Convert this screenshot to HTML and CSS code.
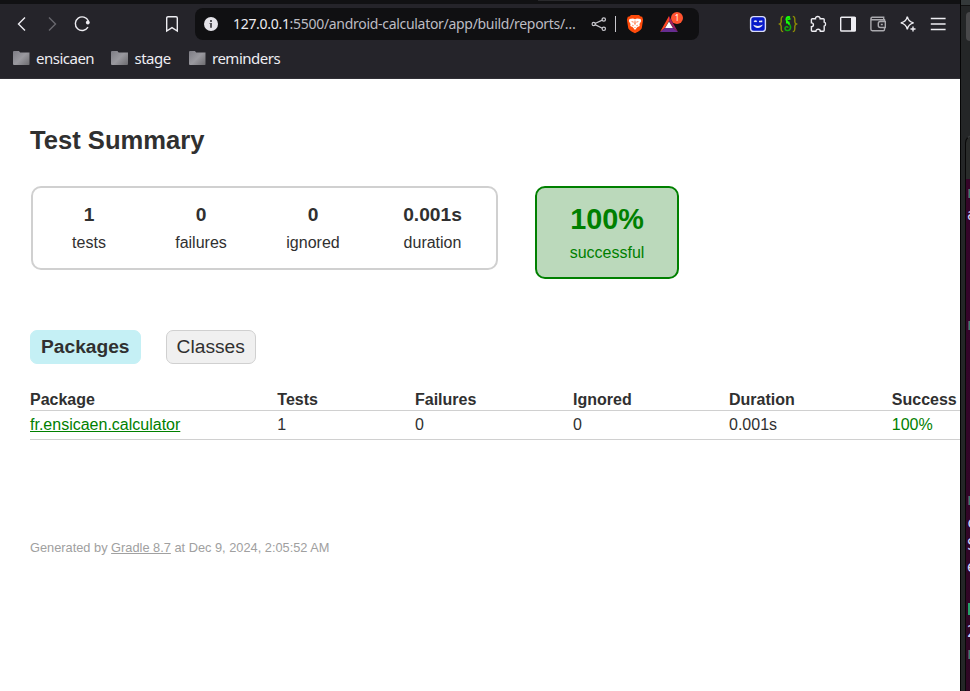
FILE: index.html
```html
<!DOCTYPE html>
<html lang="en">
<head>
<meta charset="utf-8">
<title>Test results - Test Summary</title>
<link rel="stylesheet" href="styles.css">
</head>
<body>
<div class="desktop">
<div class="browser">
  <div class="tabstrip"><span class="tab-edge"></span></div>
  <header class="toolbar">
    <button class="tool"><svg width="20" height="20" viewBox="0 0 20 20"><path d="M13 3.5 6.5 10l6.500 6.500"/></svg></button>
    <button class="tool dim"><svg width="20" height="20" viewBox="0 0 20 20"><path d="M7 3.500l6.500 6.500L7 16.500"/></svg></button>
    <button class="tool"><svg width="20" height="20" viewBox="0 0 20 20"><path d="M16 13.200A6.800 6.800 0 1 1 16.400 7"/><circle cx="15.800" cy="8.500" r="1.900" class="solid"/></svg></button>
    <button class="tool bookmark"><svg width="20" height="20" viewBox="0 0 20 20"><path d="M4.700 4a1.300 1.300 0 0 1 1.300-1.300h8a1.300 1.300 0 0 1 1.300 1.300v13L10 13.600 4.700 17z"/></svg></button>
    <div class="address">
      <svg class="info" width="14" height="14" viewBox="0 0 14 14"><circle cx="7" cy="7" r="7" fill="#e4e3e9"/><path d="M6 2.900h2v2H6zM5.500 6H8v4.800H6V7h-.500z" fill="#55545a"/></svg>
      <span class="url"><b>127.0.0.1</b>:5500/android-calculator/app/build/reports/…</span>
      <svg class="share" width="16" height="16" viewBox="0 0 16 16"><path d="m4 7.500 7.300-3.400M4 8.600l7.300 3.600"/><circle cx="2.700" cy="8" r="1.600"/><circle cx="12.800" cy="3.500" r="1.700"/><circle cx="12.800" cy="12.800" r="1.700"/></svg>
      <span class="divider"></span>
      <svg class="shield" width="18" height="20" viewBox="0 0 18 20"><path fill="#ff4b0b" d="M5 1h8l1.600 1.500 1.600.300.900 3-1.300 8.300c-.500 1.900-4.500 4.500-6.800 5.200C6.700 18.600 2.700 16 2.200 14.100L.900 5.800l.900-3 1.600-.300z"/><path fill="#fff" d="M3.500 5 7 4.600l2 .6 2-.6 3.500.400.700 2-1.700 3 .2 2-2.500 1.200L9 16l-2.200-2.800-2.500-1.200.200-2-1.700-3z"/><path fill="#ff4b0b" d="m5 7.200 2.700.5-.4 1zM13 7.200l-2.700.5.4 1zM8.700 6.500h.6l.3 3.800-.6.500-.6-.5zM6.500 10.500l1.300 1.600-1.200.2zM11.500 10.500l-1.300 1.600 1.200.2zM8 13h2l-1 .8z"/></svg>
      <span class="rewards"><svg width="18" height="16" viewBox="0 0 18 16"><path fill="#ff4724" d="M9 0v5l-4.200 7L0 16z"/><path fill="#9e1f63" d="m9 0 9 16-4.800-4L9 5z"/><path fill="#662d91" d="m0 16 4.800-4h8.400l4.800 4z"/><path fill="#fff" d="m9 5.400 3.900 6.600H5.100z"/></svg><i class="badge">1</i></span>
    </div>
    <div class="actions">
      <span class="tool"><svg width="20" height="20" viewBox="0 0 20 20"><rect x="2.600" y="2.600" width="14.800" height="14.800" rx="3.200" fill="#0719c9" stroke="#d9dcf8"/><path d="M5.300 10.800c.7 4 8.200 4.300 9.500-.3-2.500 1.700-6.500 1.900-9.500.3z" class="solid"/><path d="M6.200 7.800c.8-.9 1.700-.9 2.500 0M11 7.500h1.700M13.500 6.500v1.800" stroke-width="1.600"/></svg></span>
      <span class="tool"><svg width="20" height="20" viewBox="0 0 20 20"><path d="M5.200 2.500c-2 0-2 1-2 3v2c0 1.300-.4 2-1.500 2.500 1.100.5 1.500 1.200 1.500 2.500v2c0 2 0 3 2 3M14.800 2.500c2 0 2 1 2 3v2c0 1.300.4 2 1.500 2.500-1.100.500-1.500 1.200-1.500 2.500v2c0 2 0 3-2 3" stroke="#8d8b05"/><path d="M10.500 9c2 2.200 2.800 4.200 1.500 6.200-1.500 2.200-5 1.500-5-.8 0-2 2.700-2.400 3-.6" stroke="#11a60e" stroke-width="1.600"/><path d="M12 3.200C8.500 2.300 7.500 5 9 7.200l2.500 3.300M9.500 5.500l3-.8M8 8.500l3.500 0" stroke="#16ff08" stroke-width="1.800"/></svg></span>
      <span class="tool"><svg width="20" height="20" viewBox="0 0 20 20"><path d="M4.300 4.700h3.200c-.2-3 4.700-3 4.600 0h3.200c.6 0 .9.400.9.900v2.500c1.800.200 1.800 3.800 0 4v4.200c0 .600-.300.900-.900.900h-3c0-2.700-4.400-2.700-4.400 0H4.300c-.5 0-.9-.3-.9-.9v-3.600c2.700 0 2.700-3.800 0-3.800V5.600c0-.5.400-.9.900-.9z"/></svg></span>
      <span class="tool"><svg width="20" height="20" viewBox="0 0 20 20"><rect x="2.700" y="3.200" width="14.600" height="13.800" rx=".8"/><path class="solid" d="M13 3h4.500v14H13z"/></svg></span>
      <span class="tool muted"><svg width="20" height="20" viewBox="0 0 20 20"><path d="M16.500 7.200V5.700H4.200a1.200 1.200 0 0 1 0-2.400h11.500v2M2.900 4.500v10.800c0 .8.600 1.400 1.400 1.400h11c.7 0 1.200-.500 1.200-1.200v-2M17.300 7.500v6h-5a2 2 0 0 1-2-2v-2a2 2 0 0 1 2-2zM12.800 10.500h2"/></svg></span>
      <span class="tool"><svg width="20" height="20" viewBox="0 0 20 20"><path d="M9.300 2.700c.8 3.800 2.300 5.300 6.300 6.200-4 .9-5.500 2.500-6.300 6.500-.8-4-2.400-5.600-6.500-6.500 4.100-.9 5.700-2.400 6.500-6.200zM15 12.500v5M12.500 15h5"/></svg></span>
      <span class="tool"><svg width="20" height="20" viewBox="0 0 20 20"><path d="M2.800 4.500h14.800M2.800 10h14.800M2.800 15.500h14.800"/></svg></span>
    </div>
  </header>
  <nav class="bookmarks">
    <a><i class="folder"></i><span class="bm1">ensicaen</span></a>
    <a><i class="folder"></i><span class="bm2">stage</span></a>
    <a><i class="folder"></i><span class="bm3">reminders</span></a>
  </nav>
  <main class="report">
    <h1>Test Summary</h1>
    <div class="summary">
      <div class="group">
        <div class="stat"><div class="counter">1</div><p>tests</p></div>
        <div class="stat"><div class="counter">0</div><p>failures</p></div>
        <div class="stat"><div class="counter">0</div><p>ignored</p></div>
        <div class="stat"><div class="counter">0.001s</div><p>duration</p></div>
      </div>
      <div class="rate"><div class="percent">100%</div><p>successful</p></div>
    </div>
    <div class="tabs"><a class="tab selected">Packages</a><a class="tab">Classes</a></div>
    <div class="table">
      <div class="row head"><span>Package</span><span>Tests</span><span>Failures</span><span>Ignored</span><span>Duration</span><span>Success</span></div>
      <div class="row"><span><a class="link">fr.ensicaen.calculator</a></span><span>1</span><span>0</span><span>0</span><span>0.001s</span><span class="ok">100%</span></div>
    </div>
    <footer>Generated by <a>Gradle 8.7</a> at Dec 9, 2024, 2:05:52 AM</footer>
  </main>
</div>
<aside class="behind">
  <div class="panel"></div>
  <div class="window-tab"></div>
  <div class="terminal">
    <i class="mark" style="top:11px"></i><b style="top:27px">a</b>
    <i class="mark" style="top:143px"></i><i class="mark" style="top:318px"></i>
    <b style="top:335px">c</b><b style="top:357px">S</b><b style="top:379px">e</b>
    <i class="mark bright" style="top:425px"></i><b style="top:444px">2</b><i class="mark" style="top:472px"></i>
  </div>
</aside>
</div>
</body>
</html>
```
FILE: styles.css
```css
* { box-sizing: border-box; }
body { margin: 0; font-family: "Liberation Sans", Arial, sans-serif; font-size: 16px; color: #303030; overflow: hidden; }
p, h1 { margin: 0; }
.desktop { display: flex; width: 970px; height: 691px; }
.browser { width: 960px; height: 691px; overflow: hidden; background: #fff; }
.tabstrip { height: 4px; background: #111113; }
.tab-edge { display: block; width: 62px; height: 1px; margin-left: 538px; background: #29292c; }
.toolbar { height: 40px; background: #25242a; display: flex; align-items: center; padding: 0 7px; }
.tool { width: 30px; height: 30px; padding: 0; border: 0; background: none; display: flex; align-items: center; justify-content: center; color: #eeedf2; }
.tool svg, .share { fill: none; stroke: currentColor; stroke-width: 1.4; }
.tool .solid { fill: currentColor; stroke: none; }
.dim { color: #69686e; }
.muted { color: #aaa9ae; }
.bookmark { margin-left: 60px; }
.address { width: 504px; height: 32px; margin-left: 8px; border-radius: 8px; background: #101012; display: flex; align-items: center; padding-left: 9px; flex: none; }
.url { width: 346px; margin-left: 15px; white-space: nowrap; font: 14px/20px "Noto Sans", sans-serif; letter-spacing: -.3px; color: #bdbcc3; }
.url b { font-weight: 400; color: #eceaf0; }
.share { margin-left: 12px; color: #c8c7cd; stroke-width: 1.2; }
.divider { width: 1px; height: 16px; background: #c8c7cd; margin-left: 8px; }
.shield { margin-left: 10px; }
.rewards { position: relative; display: flex; margin-left: 16px; }
.badge { position: absolute; left: 11px; top: -4px; width: 12px; height: 12px; border-radius: 50%; background: #ff532f; color: #fff; font: 8px/12px "Noto Sans", sans-serif; text-align: center; }
.actions { display: flex; margin-left: 44px; }
.bookmarks { height: 35px; background: #25242a; display: flex; align-items: flex-start; padding-left: 12.500px; border-bottom: 1px solid #302f35; }
.bookmarks a { display: flex; align-items: center; height: 28px; margin-right: 17px; color: #eeedf2; font: 15px/20px "Noto Sans", sans-serif; }
.bookmarks span { margin-left: 6.500px; white-space: nowrap; letter-spacing: -.5px; }
.bm1 { width: 58px; }
.bm2 { width: 37px; }
.bm3 { width: 70px; }
.folder { width: 17px; height: 14px; background: linear-gradient(135deg, #7d7c84, #9a999f 50%, #6b6a6e); clip-path: polygon(0 0, 38% 0, 45% 10%, 100% 10%, 100% 100%, 0 100%); border-radius: 1px; }
.report { padding: 46px 0 0 30px; }
h1 { font-size: 25.600px; line-height: 30px; }
.summary { display: flex; align-items: flex-start; margin: 31px 0 0 1px; height: 93px; }
.group { width: 467px; height: 84px; border: 2px solid #d0d0d0; border-radius: 10px; padding: 0 1px; display: grid; grid-template-columns: 110px 110px 110px 125px; gap: 2px; text-align: center; }
.counter { font-size: 19.200px; font-weight: 700; line-height: 22px; margin-top: 16px; }
.stat p { line-height: 18px; margin-top: 8px; }
.rate { width: 144px; height: 93px; margin-left: 37px; border: 2px solid #008000; border-radius: 10px; background: #bbd9bb; color: #008000; text-align: center; }
.percent { font-size: 28.800px; font-weight: 700; line-height: 33px; margin-top: 15px; }
.rate p { line-height: 18px; margin-top: 8px; }
.tabs { display: flex; gap: 25px; margin-top: 51px; }
.tab { width: 90px; height: 34px; border: 1px solid #d0d0d0; border-radius: 7px; background: #f0f0f0; font-size: 19.200px; line-height: 32px; padding-left: 9.600px; }
.tab.selected { width: 111px; padding-left: 10px; border-color: #c5f0f5; background: #c5f0f5; font-weight: 700; }
.table { margin-top: 26px; }
.row { display: grid; grid-template-columns: 247.300px 137.700px 158px 156px 162.800px 68px; height: 29px; line-height: 28px; border-bottom: 1px solid #d0d0d0; white-space: nowrap; }
.row.head { height: 21px; line-height: 19px; font-weight: 700; }
.link { color: #008000; text-decoration: underline; }
.ok { color: #008000; }
footer { margin-top: 100px; font-size: 12.800px; line-height: 16px; color: #a0a0a0; }
footer a { text-decoration: underline; }
.behind { width: 10px; height: 691px; overflow: hidden; background: #242627; border-left: 1px solid #050505; position: relative; }
.panel { height: 6px; background: #34393a; border-bottom: 1px solid #111; }
.window-tab { height: 29px; width: 4px; margin: 6px 0 0 5px; background: #48484a; border-radius: 5px 0 0 5px; }
.terminal { position: absolute; left: 4px; top: 135px; width: 14px; height: 570px; border: 1px solid #080808; border-radius: 8px 0 0 0; border-top-color: #3b3e3f; background: linear-gradient(#292b2a 43px, #350528 43px, #35042a 150px, #2f0724); }
.terminal i, .terminal b { position: absolute; margin-top: 42px; }
.mark { left: 2px; width: 4px; height: 9px; background: #36806b; border-left: 1px solid #5a415d; }
.mark.bright { height: 12px; background: #26a269; border: 0; }
.terminal b { left: 1px; font: 15px/20px "DejaVu Sans Mono", monospace; color: #d3d9fa; }
```
